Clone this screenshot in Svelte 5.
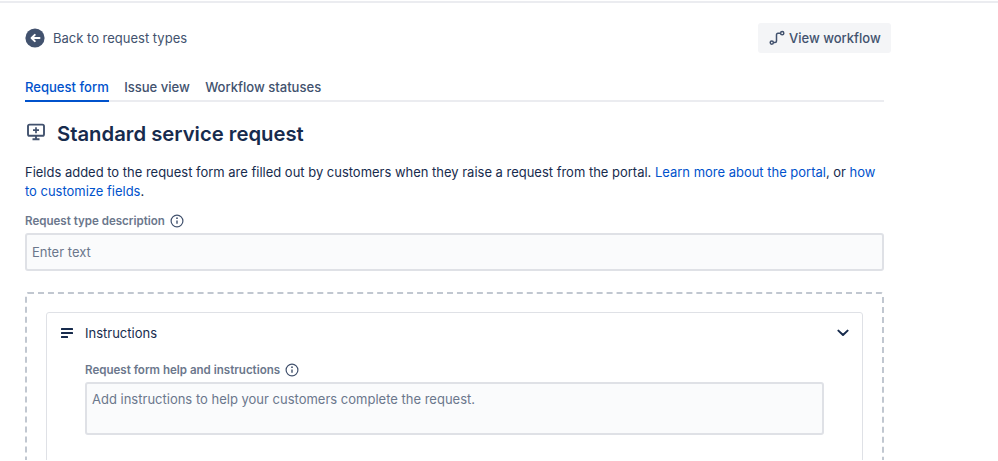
<script>
  const tabs = ['Request form', 'Issue view', 'Workflow statuses'];
</script>

<div class="topline"></div>
<main class="page">
  <div class="head">
    <div class="back">
      <svg class="backicon" width="20" height="20" viewBox="0 0 20 20">
        <circle cx="10" cy="10" r="9.6" fill="#42526e" />
        <path d="M14.5 10H7M9.8 6.9 6.6 10l3.2 3.1" fill="none" stroke="#fff" stroke-width="2" stroke-linecap="round" stroke-linejoin="round" />
      </svg>
      <span>Back to request types</span>
    </div>
    <button class="wf">
      <svg width="16" height="16" viewBox="0 0 16 16" fill="none" stroke="#42526e" stroke-width="1.5">
        <circle cx="2.8" cy="12.6" r="1.6" />
        <circle cx="13.2" cy="3.2" r="1.6" />
        <path d="M4.6 12.6H6a1.5 1.5 0 0 0 1.5-1.5V5A1.6 1.6 0 0 1 9 3.3h2.4" />
      </svg>
      View workflow
    </button>
  </div>

  <nav class="tabs">
    {#each tabs as t, i}
      <span class="tab" class:active={i === 0}>{t}</span>
    {/each}
  </nav>

  <h1>
    <svg width="20" height="20" viewBox="0 0 20 20" fill="none" stroke="#42526e" stroke-width="1.9">
      <rect x="2" y="2.6" width="16" height="11.2" rx="1.6" />
      <path d="M10 5.2v6M7 8.2h6" stroke-width="1.7" />
      <path d="M10 14v3M6.5 17.2h7" />
    </svg>
    <span>Standard service request</span>
  </h1>

  <p class="intro">
    Fields added to the request form are filled out by customers when they raise a request from the portal.
    <a href="#a">Learn more about the portal</a>, or <a href="#b">how to customize fields</a>.
  </p>

  <div class="label first">
    Request type description
    <svg class="info" width="14" height="14" viewBox="0 0 14 14" fill="none" stroke="#42526e">
      <circle cx="7" cy="7" r="5.9" stroke-width="1.2" />
      <path d="M7 6.4v3.4" stroke-width="1.4" />
      <circle cx="7" cy="4.2" r=".9" fill="#42526e" stroke="none" />
    </svg>
  </div>
  <div class="field single">Enter text</div>

  <section class="drop">
    <div class="card">
      <div class="cardhead">
        <svg width="14" height="10" viewBox="0 0 14 10" fill="#172b4d">
          <rect x="1" y="0" width="12" height="2" rx=".6" />
          <rect x="1" y="4" width="12" height="2" rx=".6" />
          <rect x="1" y="8" width="7" height="2" rx=".6" />
        </svg>
        <span class="ctitle">Instructions</span>
        <svg class="chev" width="12" height="8" viewBox="0 0 12 8" fill="none" stroke="#172b4d" stroke-width="2" stroke-linecap="round" stroke-linejoin="round">
          <path d="M1.4 1.6 6 6l4.6-4.4" />
        </svg>
      </div>
      <div class="cardbody">
        <div class="label">
          Request form help and instructions
          <svg class="info" width="14" height="14" viewBox="0 0 14 14" fill="none" stroke="#42526e">
            <circle cx="7" cy="7" r="5.9" stroke-width="1.2" />
            <path d="M7 6.4v3.4" stroke-width="1.4" />
            <circle cx="7" cy="4.2" r=".9" fill="#42526e" stroke="none" />
          </svg>
        </div>
        <div class="field area">Add instructions to help your customers complete the request.</div>
      </div>
    </div>
  </section>
</main>

<style>
  :global(body) {
    background: #fff;
    height: 461px;
    overflow: hidden;
  }
  .topline {
    height: 3px;
    box-sizing: border-box;
    border-bottom: 2px solid #ebecf0;
  }
  .page {
    width: 859px;
    margin-left: 25px;
    font-family: Inter, "Liberation Sans", sans-serif;
    font-size: 13px;
    color: #172b4d;
  }
  .head {
    display: flex;
    justify-content: space-between;
    align-items: center;
    width: 866px;
    height: 30px;
    margin-top: 20px;
  }
  .back {
    display: flex;
    align-items: center;
    gap: 8px;
    color: #42526e;
    font-size: 13px;
  }
  .wf {
    display: flex;
    align-items: center;
    gap: 4px;
    width: 133px;
    height: 30px;
    padding: 0 0 0 11px;
    border: 0;
    border-radius: 3px;
    background: #f4f5f7;
    color: #42526e;
    font: 500 13px Inter, "Liberation Sans", sans-serif;
  }
  .tabs {
    display: flex;
    gap: 15.4px;
    height: 29px;
    margin-top: 18px;
    border-bottom: 2px solid #ebecf0;
  }
  .tab {
    height: 29px;
    line-height: 33px;
    color: #42526e;
    font-weight: 500;
    font-size: 13.05px;
  }
  .active {
    color: #0052cc;
    border-bottom: 2px solid #0052cc;
  }
  h1 {
    display: flex;
    align-items: center;
    gap: 12px;
    height: 30px;
    margin: 16px 0 0;
    font-size: 20.3px;
    font-weight: 600;
    color: #172b4d;
  }
  h1 svg {
    margin-bottom: 3px;
    margin-left: 1px;
    margin-right: -1px;
  }
  .intro {
    margin: 15px 0 0;
    line-height: 19px;
    font-size: 12.97px;
  }
  a {
    color: #0052cc;
    text-decoration: none;
  }
  .label {
    display: flex;
    align-items: center;
    gap: 5px;
    height: 16px;
    font-size: 11.55px;
    font-weight: 600;
    color: #6b778c;
  }
  .first {
    margin-top: 12px;
  }
  .info {
    flex: none;
  }
  .field {
    box-sizing: border-box;
    margin-top: 4px;
    border: 2px solid #dfe1e6;
    border-radius: 3px;
    background: #fafbfc;
    color: #6b778c;
    font-size: 13px;
    padding-left: 5px;
  }
  .single {
    height: 38px;
    line-height: 34px;
  }
  .area {
    height: 53px;
    padding-top: 6px;
    line-height: 19px;
    width: 739px;
  }
  .drop {
    box-sizing: border-box;
    margin-top: 21px;
    height: 168px;
    padding: 18px 19px 0;
    border: 2px dashed #c1c7d0;
    border-bottom: 0;
    border-radius: 3px 3px 0 0;
    overflow: hidden;
  }
  .card {
    height: 200px;
    border: 1px solid #dfe1e6;
    border-radius: 3px;
  }
  .cardhead {
    display: flex;
    align-items: center;
    height: 40px;
    padding-left: 13px;
  }
  .ctitle {
    margin-left: 11px;
    font-size: 13px;
  }
  .chev {
    margin-left: auto;
    margin-right: 13px;
  }
  .cardbody {
    padding: 9px 38px 0;
  }
</style>
